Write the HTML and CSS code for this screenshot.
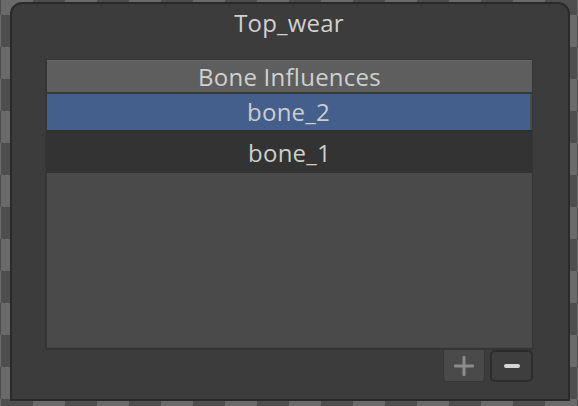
FILE: index.html
```html
<!DOCTYPE html>
<html>
<head>
<meta charset="utf-8">
<link rel="stylesheet" href="styles.css">
</head>
<body>
<div class="panel">
  <div class="title">Top_wear</div>
  <div class="list">
    <div class="list-header">Bone Influences</div>
    <div class="item selected">bone_2</div>
    <div class="item normal">bone_1</div>
    <div class="list-empty"></div>
  </div>
  <div class="buttons">
    <button class="btn btn-add" aria-label="Add">
      <svg width="20" height="20" viewBox="0 0 20 20"><rect x="0" y="8.5" width="20" height="3" rx="1" fill="#8c8c8c"/><rect x="8.5" y="0" width="3" height="20" rx="1" fill="#8c8c8c"/></svg>
    </button>
    <button class="btn btn-remove" aria-label="Remove">
      <svg width="16" height="4" viewBox="0 0 16 4"><rect x="0" y="0" width="16" height="4" rx="2" fill="#d6d6d6"/></svg>
    </button>
  </div>
</div>
</body>
</html>
```
FILE: styles.css
```css
html, body {
  margin: 0;
  height: 100%;
}
body {
  box-sizing: border-box;
  padding: 2px 0 0 10px;
  overflow: hidden;
  background: repeating-conic-gradient(#6a6a6a 0 25%, #4e4e4e 0 50%) 1px 15px / 64px 64px;
  font-family: "Open Sans", "Noto Sans", sans-serif;
}
.panel {
  width: 560px;
  height: 399px;
  box-sizing: border-box;
  border: 2px solid #2a2a2a;
  border-radius: 12px 12px 0 0;
  background: #3c3c3c;
  display: flex;
  flex-direction: column;
  padding: 1px 35px 0 33px;
}
.title {
  height: 36px;
  line-height: 36px;
  text-align: center;
  font-size: 24px;
  letter-spacing: 0.2px;
  color: #d0d0d0;
  margin-bottom: 18px;
}
.list {
  height: 291px;
  box-sizing: border-box;
  border-style: solid;
  border-color: #353535;
  border-width: 1px 1px 2px 2px;
  background: #4a4a4a;
  display: flex;
  flex-direction: column;
}
.list-header {
  height: 31px;
  line-height: 31px;
  border-top: 1px solid #686868;
  border-bottom: 2px solid #393939;
  background: #5e5e5e;
  text-align: center;
  font-size: 24px;
  letter-spacing: 0.25px;
  color: #d0d0d0;
}
.item {
  text-align: center;
  font-size: 24px;
  letter-spacing: 0.2px;
  color: #cdcdcd;
}
.selected {
  height: 36px;
  line-height: 36px;
  background: #445f8c;
  margin-right: 2px;
}
.normal {
  height: 41px;
  line-height: 41px;
  border-top: 2px solid #2f2f2f;
  background: #333333;
}
.list-empty {
  flex: 1;
  border-bottom: 1px solid #454545;
}
.buttons {
  display: flex;
  justify-content: flex-end;
  gap: 5px;
  height: 32px;
}
.btn {
  margin: 0;
  padding: 0;
  height: 32px;
  box-sizing: border-box;
  display: flex;
  align-items: center;
  justify-content: center;
  font: inherit;
}
.btn-add {
  width: 42px;
  background: #4a4a4a;
  border: 1px solid #363636;
  border-top: none;
  border-radius: 0 0 4px 4px;
}
.btn-remove {
  width: 43px;
  background: #3e3e3e;
  border: 2px solid #2c2c2c;
  border-radius: 5px;
}
```
